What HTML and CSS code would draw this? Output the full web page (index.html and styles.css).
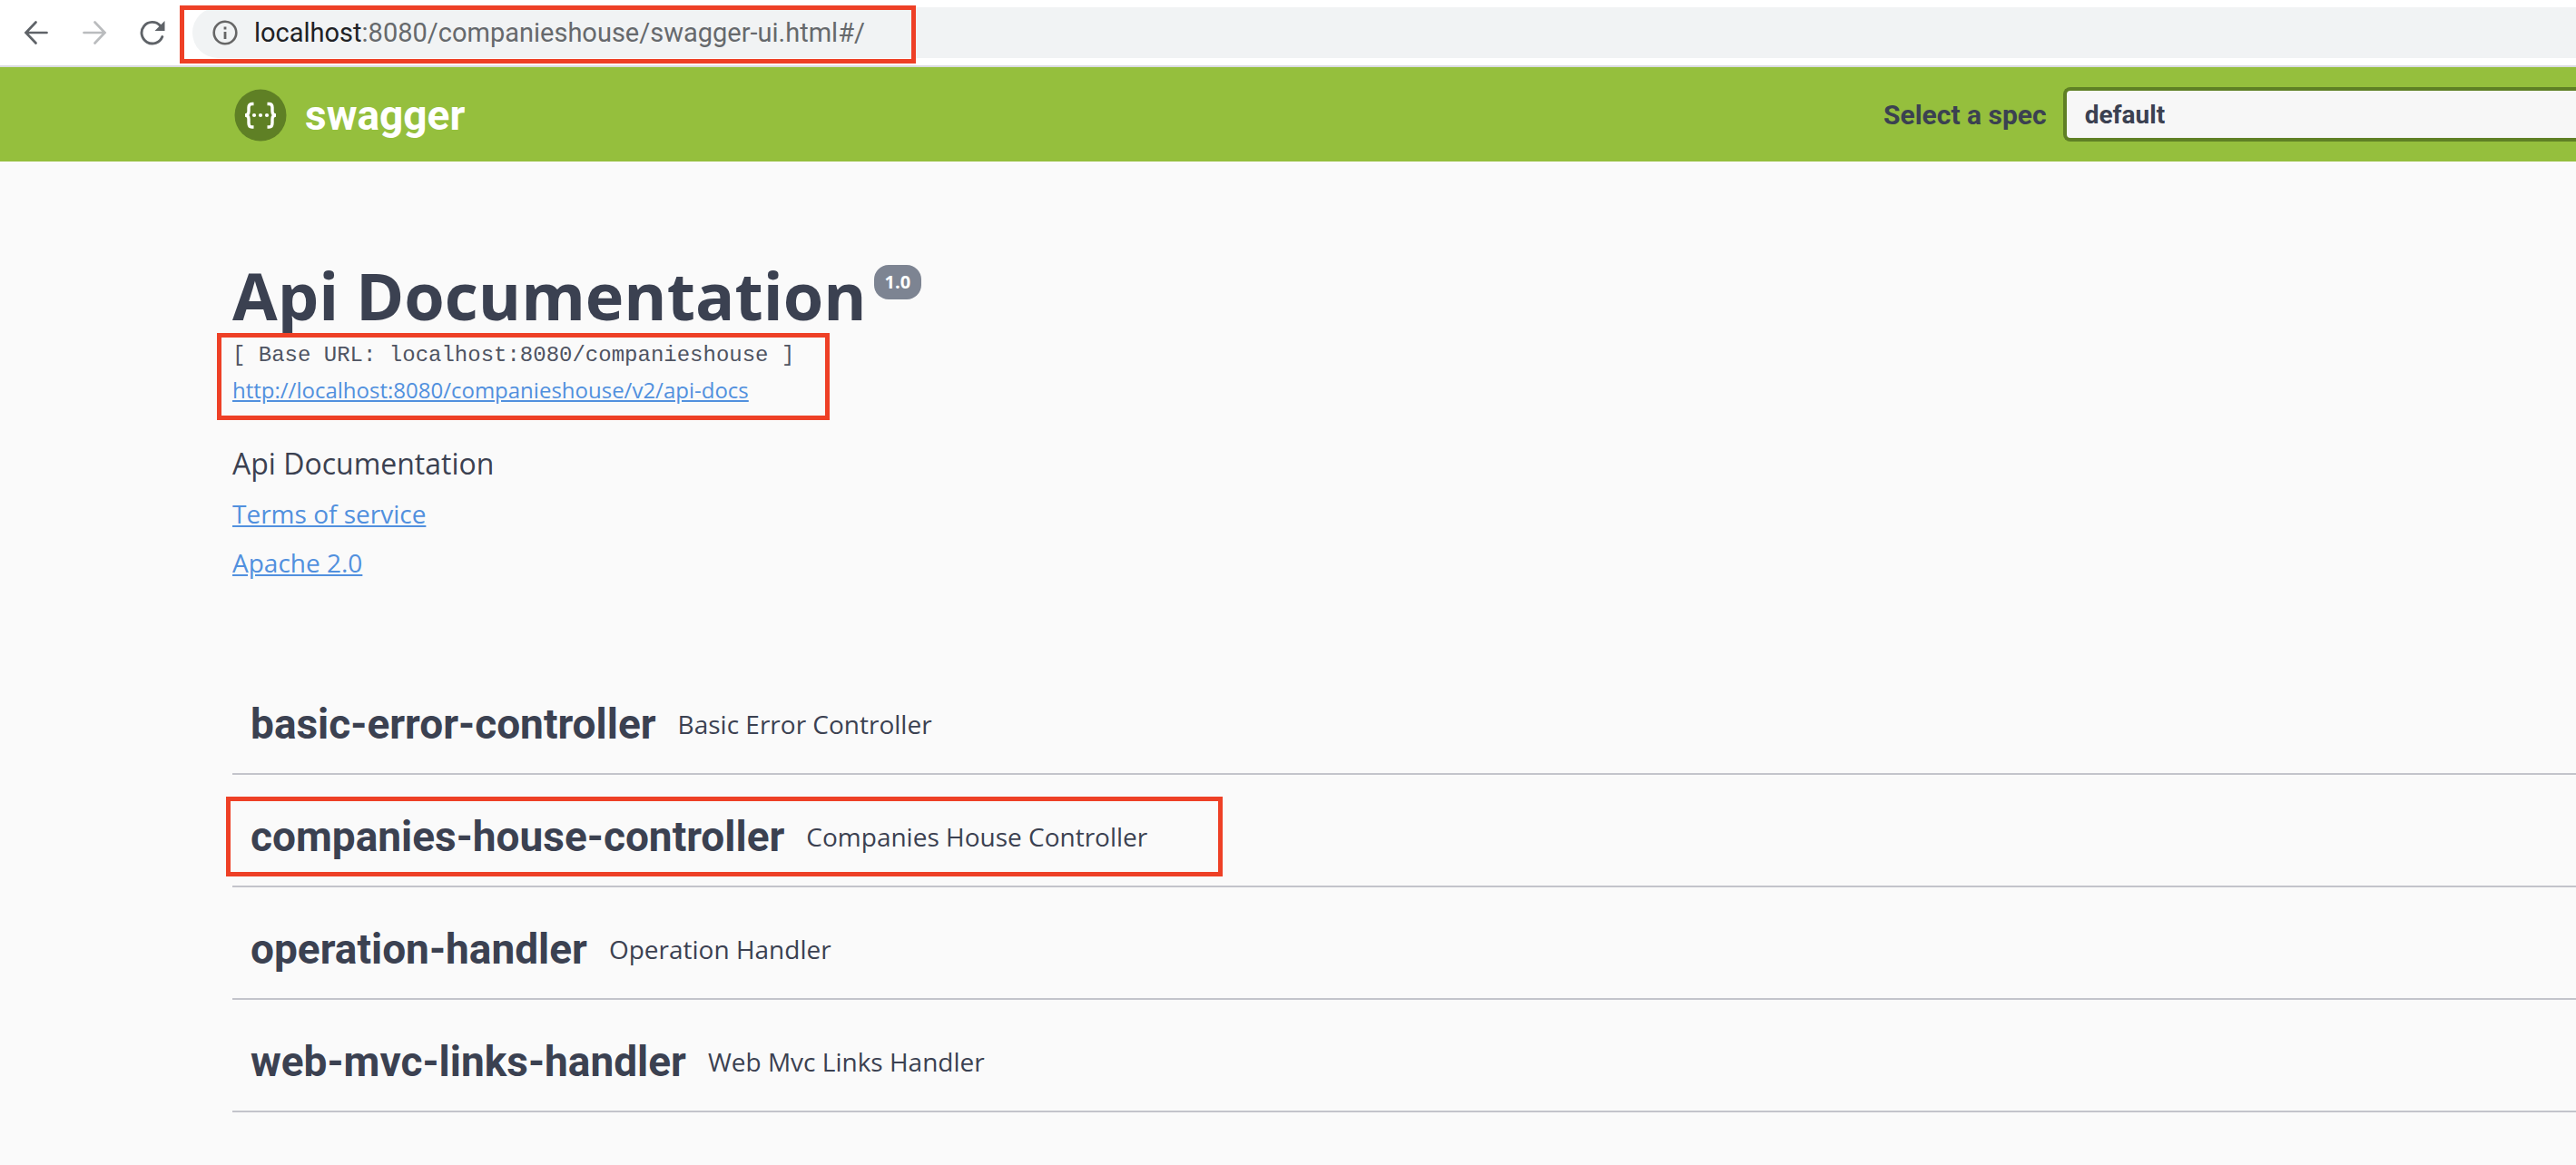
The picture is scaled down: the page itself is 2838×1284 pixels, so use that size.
FILE: index.html
```html
<!DOCTYPE html>
<html lang="en">
<head>
<meta charset="utf-8">
<title>Swagger UI</title>
<link rel="stylesheet" href="styles.css">
</head>
<body>
<div class="browser-bar">
  <nav class="nav-buttons" aria-label="Browser">
    <button class="icon-button" type="button" aria-label="Back">
      <svg width="28" height="28" viewBox="0 0 28 28" fill="none" stroke="#5f6368" stroke-width="2.700" stroke-linecap="round"><path d="M25.500 14H3M13.500 2.500L2.500 14l11 11.500"/></svg>
    </button>
    <button class="icon-button" type="button" aria-label="Forward">
      <svg width="28" height="28" viewBox="0 0 28 28" fill="none" stroke="#babcbe" stroke-width="2.700" stroke-linecap="round"><path d="M2.500 14H25M14.500 2.500l11 11.500l-11 11.500"/></svg>
    </button>
    <button class="icon-button" type="button" aria-label="Reload">
      <svg width="28" height="28" viewBox="0 0 28 28"><path d="M24.800 18.500A11.800 11.800 0 1 1 22.500 6.200" fill="none" stroke="#5f6368" stroke-width="2.900" stroke-linecap="round"/><path d="M27.500 1v11H16.500z" fill="#5f6368"/></svg>
    </button>
  </nav>
  <div class="address">
    <svg class="info-icon" width="28" height="28" viewBox="0 0 28 28"><circle cx="14" cy="14" r="12.300" fill="none" stroke="#666" stroke-width="2.600"/><path d="M12.600 7.500h2.800v3h-2.800zM12.600 13h2.800v8h-2.800z" fill="#666"/></svg>
    <span class="url"><span class="url-host">localhost</span>:8080/companieshouse/swagger-ui.html#/</span>
    <div class="highlight highlight-address"></div>
  </div>
</div>

<header class="topbar">
  <a class="brand" href="#">
    <svg width="58" height="58" viewBox="0 0 58 58"><circle cx="29" cy="29" r="28.500" fill="#5f8025"/><g fill="none" stroke="#fff" stroke-width="3.400"><path d="M21.500 16.500h-2q-3.500 0-3.500 4v4q0 4.500-4 4.500q4 0 4 4.500v4q0 4.500 3.500 4.500h2"/><path d="M36.500 16.500h2q3.500 0 3.500 4v4q0 4.500 4 4.500q-4 0-4 4.500v4q0 4.500-3.500 4.500h-2"/></g><g fill="#fff"><circle cx="22" cy="29" r="2.100"/><circle cx="29" cy="29" r="2.100"/><circle cx="36" cy="29" r="2.100"/></g></svg>
    <span>swagger</span>
  </a>
  <form class="spec-form">
    <label for="spec">Select a spec</label>
    <select id="spec"><option>default</option></select>
  </form>
</header>

<main class="content">
  <section class="info">
    <h1 class="title">Api Documentation<span class="version">1.0</span></h1>
    <div class="endpoint">
      <div class="base-url">[ Base URL: localhost:8080/companieshouse ]</div>
      <a class="docs-link" href="#">http://localhost:8080/companieshouse/v2/api-docs</a>
      <div class="highlight highlight-endpoint"></div>
    </div>
    <p class="description">Api Documentation</p>
    <div class="legal">
      <a href="#">Terms of service</a>
      <a href="#">Apache 2.0</a>
    </div>
  </section>
  <section class="tags">
    <div class="tag"><h2>basic-error-controller</h2><span>Basic Error Controller</span></div>
    <div class="tag"><h2>companies-house-controller</h2><span>Companies House Controller</span><div class="highlight highlight-tag"></div></div>
    <div class="tag"><h2>operation-handler</h2><span>Operation Handler</span></div>
    <div class="tag"><h2>web-mvc-links-handler</h2><span>Web Mvc Links Handler</span></div>
  </section>
</main>
</body>
</html>
```
FILE: styles.css
```css
* { box-sizing: border-box; }

body {
  margin: 0;
  background: #fafafa;
  color: #3b4151;
  font-family: "Open Sans", "Noto Sans", sans-serif;
}

h1, h2, p { margin: 0; }

svg { display: block; }

a { color: #5190de; }

/* Browser toolbar */
.browser-bar {
  display: flex;
  gap: 30px;
  padding: 8px 0 8px 26px;
  background: #fff;
  border-bottom: 2px solid #dadce0;
}

.nav-buttons {
  display: flex;
  align-items: center;
  gap: 36px;
}

.icon-button {
  padding: 0;
  border: 0;
  background: none;
}

.address {
  position: relative;
  display: flex;
  flex: 1;
  align-items: center;
  gap: 18px;
  height: 56px;
  padding-left: 22px;
  border-radius: 28px 0 0 28px;
  background: #f1f3f4;
}

.url {
  color: #66696c;
  font-family: Roboto, sans-serif;
  font-size: 29px;
  line-height: 56px;
}

.url-host { color: #202124; }

/* Red frames laid over the parts of interest */
.highlight {
  position: absolute;
  border: 5px solid #ee4026;
  pointer-events: none;
}

.highlight-address { top: -2px; left: -14px; width: 811px; height: 64px; }
.highlight-endpoint { top: -6px; left: -17px; width: 675px; height: 96px; }
.highlight-tag { top: 24px; left: -7px; width: 1098px; height: 88px; }

/* Swagger header */
.topbar {
  display: flex;
  align-items: center;
  justify-content: space-between;
  padding: 22px 0 22px 258px;
  background: #95bf3d;
  font-family: Roboto, sans-serif;
  font-weight: 700;
}

.brand {
  display: flex;
  align-items: center;
  gap: 20px;
  padding-top: 2px;
  color: #fff;
  font-size: 46px;
  line-height: 58px;
  text-decoration: none;
}

.spec-form {
  display: flex;
  flex: 0 0 763px;
  align-items: center;
  gap: 18px;
  font-size: 30px;
}

.spec-form label { white-space: nowrap; }

.spec-form select {
  flex: 1;
  height: 60px;
  padding: 0 20px;
  border: 4px solid #5f8025;
  border-right: 0;
  border-radius: 8px 0 0 8px;
  appearance: none;
  background: #f7f7f7;
  color: #3b4151;
  font: 700 28px Roboto, sans-serif;
}

/* API information */
.content { padding: 107px 0 40px 256px; }

.title {
  display: flex;
  align-items: flex-start;
  gap: 8px;
  font-size: 72px;
  line-height: 80px;
}

.version {
  margin-top: 7px;
  padding: 0 12px;
  border-radius: 16px;
  background: #7d8492;
  color: #fff;
  font-size: 20px;
  line-height: 38px;
}

.endpoint {
  position: relative;
  margin-top: 8px;
  font-size: 24px;
  line-height: 38px;
}

.base-url {
  color: #4f5462;
  font-family: "Liberation Mono", monospace;
}

.docs-link { display: inline-block; }

.description {
  margin-top: 40px;
  font-size: 32px;
  line-height: 44px;
}

.legal {
  display: flex;
  flex-direction: column;
  align-items: flex-start;
  margin-top: 6px;
  font-size: 28px;
  line-height: 54px;
}

/* Controller list */
.tags { margin-top: 83px; }

.tag {
  position: relative;
  display: flex;
  align-items: center;
  gap: 24px;
  padding: 24px 20px 10px;
  border-bottom: 2px solid #c3c4cb;
  font-size: 28px;
  line-height: 88px;
}

.tag h2 {
  font-family: Roboto, sans-serif;
  font-size: 46px;
  font-weight: 700;
}
```
